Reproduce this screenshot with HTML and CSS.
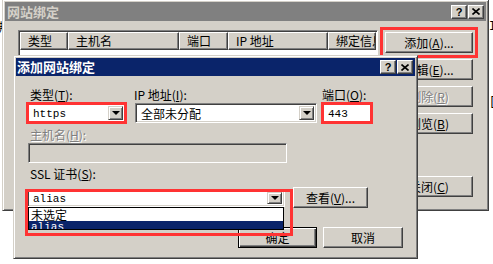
FILE: index.html
```html
<!DOCTYPE html>
<html lang="zh-CN">
<head>
    <meta charset="UTF-8">
    <title>添加网站绑定</title>
    <link rel="stylesheet" href="styles.css">
</head>
<body>
    <span class="bg-text bg-left">绑</span>
    <span class="bg-text bg-r1">I</span>
    <span class="bg-text bg-r2">[</span>

    <!-- 后面的窗口：网站绑定 -->
    <div class="win outer">
        <div class="title inactive">
            <span class="title-text">网站绑定</span>
            <div class="caps">
                <span class="cap">?</span>
                <span class="cap"><svg width="8" height="7" viewBox="0 0 8 7"><path d="M0.5 0.5 L7.5 6.5 M7.5 0.5 L0.5 6.5" stroke="#000" stroke-width="1.6"/></svg></span>
            </div>
        </div>
        <div class="outer-body">
            <div class="list">
                <div class="list-head">
                    <div class="hcol h1">类型</div>
                    <div class="hcol h2">主机名</div>
                    <div class="hcol h3">端口</div>
                    <div class="hcol h4">IP 地址</div>
                    <div class="hcol h5">绑定信息</div>
                </div>
            </div>
            <div class="side-btns">
                <div class="btn mark">添加(<u>A</u>)...</div>
                <div class="btn">编辑(<u>E</u>)...</div>
                <div class="btn disabled">删除(<u>R</u>)</div>
                <div class="btn">浏览(<u>B</u>)</div>
                <div class="btn close">关闭(<u>C</u>)</div>
            </div>
        </div>
    </div>

    <!-- 前面的对话框：添加网站绑定 -->
    <div class="win dialog">
        <div class="title active">
            <span class="title-text">添加网站绑定</span>
            <div class="caps">
                <span class="cap">?</span>
                <span class="cap"><svg width="8" height="7" viewBox="0 0 8 7"><path d="M0.5 0.5 L7.5 6.5 M7.5 0.5 L0.5 6.5" stroke="#000" stroke-width="1.6"/></svg></span>
            </div>
        </div>
        <div class="dlg-body">
            <div class="row-top">
                <div class="field f-type">
                    <label class="lbl">类型(<u>T</u>):</label>
                    <div class="combo mark-in">
                        <span class="val mono">https</span>
                        <span class="drop"><i class="tri"></i></span>
                    </div>
                </div>
                <div class="field f-ip">
                    <label class="lbl">IP 地址(<u>I</u>):</label>
                    <div class="combo">
                        <span class="val">全部未分配</span>
                        <span class="drop"><i class="tri"></i></span>
                    </div>
                </div>
                <div class="field f-port">
                    <label class="lbl">端口(<u>O</u>):</label>
                    <div class="combo mark-in">
                        <span class="val mono">443</span>
                    </div>
                </div>
            </div>

            <label class="lbl lbl-host off">主机名(<u>H</u>):</label>
            <div class="textbox off"></div>

            <label class="lbl lbl-ssl">SSL 证书(<u>S</u>):</label>
            <div class="row-ssl">
                <div class="ssl-wrap">
                    <div class="combo small">
                        <span class="val mono">alias</span>
                        <span class="drop"><i class="tri"></i></span>
                    </div>
                    <div class="ddlist">
                        <div class="opt">未选定</div>
                        <div class="opt sel mono">alias</div>
                    </div>
                </div>
                <div class="btn view">查看(<u>V</u>)...</div>
            </div>

            <div class="dlg-btns">
                <div class="btn ok">确定</div>
                <div class="btn cancel">取消</div>
            </div>
        </div>
    </div>
</body>
</html>
```

FILE: styles.css
```css
* {
    box-sizing: border-box;
}
body {
    margin: 0;
    width: 493px;
    height: 264px;
    overflow: hidden;
    position: relative;
    background: #fff;
    font-family: "Noto Sans CJK SC", "Liberation Sans", sans-serif;
    font-size: 12px;
    color: #000;
}
u {
    text-decoration: underline;
}
.mono {
    font-family: "Liberation Mono", "Noto Sans CJK SC", monospace;
    font-size: 11px;
}
.bg-text {
    position: absolute;
    font-size: 12px;
    line-height: 12px;
}
.bg-left { left: -5px; top: 21px; }
.bg-r1 { left: 489px; top: 21px; font-family: "Liberation Mono", monospace; }
.bg-r2 { left: 489px; top: 96px; font-family: "Liberation Mono", monospace; }

/* 窗口外框 */
.win {
    position: absolute;
    display: flex;
    flex-direction: column;
    padding: 2px;
    background: #d4d0c8;
    border: 1px solid;
    border-color: #d4d0c8 #404040 #404040 #d4d0c8;
    box-shadow: inset 1px 1px #fff, inset -1px -1px #808080;
}
.outer {
    left: 2px;
    top: -1px;
    width: 487px;
    height: 212px;
}
.dialog {
    left: 13px;
    top: 55px;
    width: 405px;
    height: 204px;
}
.title {
    height: 18px;
    display: flex;
    align-items: center;
    padding: 0 2px 0 1px;
    flex-shrink: 0;
}
.outer .title {
    height: 19px;
    padding-left: 2px;
}
.title.active {
    background: #0a246a;
    color: #fff;
}
.title.inactive {
    background: #808080;
    color: #d4d0c8;
}
.title-text {
    flex: 1;
    font-weight: bold;
    font-size: 13px;
    line-height: 18px;
}
.caps {
    display: flex;
    gap: 1px;
}
.cap {
    width: 16px;
    height: 14px;
    display: flex;
    align-items: center;
    justify-content: center;
    background: #d4d0c8;
    border: 1px solid;
    border-color: #fff #404040 #404040 #fff;
    box-shadow: inset -1px -1px #808080;
    color: #000;
    font: bold 11px "Liberation Sans", sans-serif;
}

/* 按钮 */
.btn {
    height: 21px;
    display: flex;
    align-items: center;
    justify-content: center;
    white-space: nowrap;
    background: #d4d0c8;
    border: 1px solid;
    border-color: #fff #404040 #404040 #fff;
    box-shadow: inset -1px -1px #808080;
    line-height: 12px;
}
.btn.disabled {
    color: #808080;
    text-shadow: 1px 1px #fff;
}
.mark {
    outline: 3px solid #f33;
    outline-offset: 2px;
}

/* 网站绑定窗口内容 */
.outer-body {
    flex: 1;
    display: flex;
    padding: 0 13px;
}
.list {
    width: 360px;
    height: 140px;
    margin-top: 9px;
    padding: 1px;
    background: #fff;
    border: 1px solid;
    border-color: #808080 #fff #fff #808080;
    box-shadow: inset 1px 1px #404040;
}
.list-head {
    display: flex;
    height: 18px;
}
.hcol {
    padding-left: 7px;
    line-height: 15px;
    white-space: nowrap;
    overflow: hidden;
    background: #d4d0c8;
    border: 1px solid;
    border-color: #fff #404040 #404040 #fff;
    box-shadow: inset -1px -1px #808080;
}
.h1 { width: 48px; }
.h2 { width: 111px; }
.h3 { width: 49px; }
.h4 { width: 100px; }
.h5 { flex: 1; }
.side-btns {
    width: 88px;
    margin-left: 7px;
    margin-top: 11px;
    display: flex;
    flex-direction: column;
    gap: 6px;
}
.side-btns .close {
    margin-top: 36px;
}

/* 添加网站绑定对话框内容 */
.dlg-body {
    flex: 1;
    display: flex;
    flex-direction: column;
    align-items: flex-start;
    padding: 13px 12px 0 11px;
}
.row-top {
    display: flex;
}
.field {
    display: flex;
    flex-direction: column;
}
.f-type { width: 99px; }
.f-ip { width: 182px; margin-left: 9px; }
.f-port { width: 50px; margin-left: 5px; }
.lbl {
    line-height: 12px;
    height: 12px;
    white-space: nowrap;
    margin-bottom: 2px;
}
.f-type .lbl { padding-left: 3px; }
.f-ip .lbl { margin-left: -1px; }
.lbl.off {
    color: #808080;
    text-shadow: 1px 1px #fff;
}
.lbl-host {
    margin-top: 6px;
    padding-left: 3px;
}
.lbl-ssl {
    margin-top: 5px;
    padding-left: 3px;
}
.combo {
    height: 20px;
    display: flex;
    padding: 2px;
    background: #fff;
    border: 1px solid;
    border-color: #808080 #fff #fff #808080;
    box-shadow: inset 1px 1px #404040, inset -1px -1px #d4d0c8;
}
.combo .val {
    flex: 1;
    padding-left: 3px;
    line-height: 16px;
    white-space: nowrap;
}
.combo .drop {
    width: 15px;
    display: flex;
    align-items: center;
    justify-content: center;
    background: #d4d0c8;
    border: 1px solid;
    border-color: #d4d0c8 #404040 #404040 #d4d0c8;
    box-shadow: inset 1px 1px #fff, inset -1px -1px #808080;
}
.tri {
    width: 0;
    height: 0;
    border-left: 4px solid transparent;
    border-right: 4px solid transparent;
    border-top: 4px solid #000;
}
.mark-in {
    outline: 3px solid #f33;
    outline-offset: -2px;
}
.textbox {
    width: 259px;
    height: 20px;
    margin-left: 1px;
    border: 1px solid;
    border-color: #808080 #fff #fff #808080;
    box-shadow: inset 1px 1px #404040, inset -1px -1px #d4d0c8;
}
.textbox.off {
    background: #d4d0c8;
}
.row-ssl {
    display: flex;
    align-items: flex-start;
    margin-top: 5px;
}
.ssl-wrap {
    position: relative;
    width: 258px;
    margin-top: 2px;
}
.combo.small {
    height: 18px;
}
.combo.small .val {
    line-height: 14px;
}
.ddlist {
    position: absolute;
    left: 1px;
    right: 1px;
    top: 18px;
    height: 23px;
    overflow: hidden;
    background: #fff;
    border: 1px solid #000;
}
.opt {
    height: 13px;
    line-height: 13px;
    padding-left: 2px;
    white-space: nowrap;
}
.opt.sel {
    background: #0a246a;
    color: #fff;
}
.ssl-wrap::after {
    content: "";
    position: absolute;
    left: -2px;
    top: 0;
    width: 262px;
    height: 41px;
    border: 3px solid #f33;
}
.view {
    width: 75px;
    margin-left: 8px;
}
.dlg-btns {
    align-self: stretch;
    display: flex;
    justify-content: flex-end;
    gap: 6px;
    margin-top: 19px;
}
.ok {
    width: 79px;
    border-color: #000;
    box-shadow: inset 1px 1px #fff, inset -1px -1px #404040, inset -2px -2px #808080;
}
.cancel {
    width: 80px;
}
```
